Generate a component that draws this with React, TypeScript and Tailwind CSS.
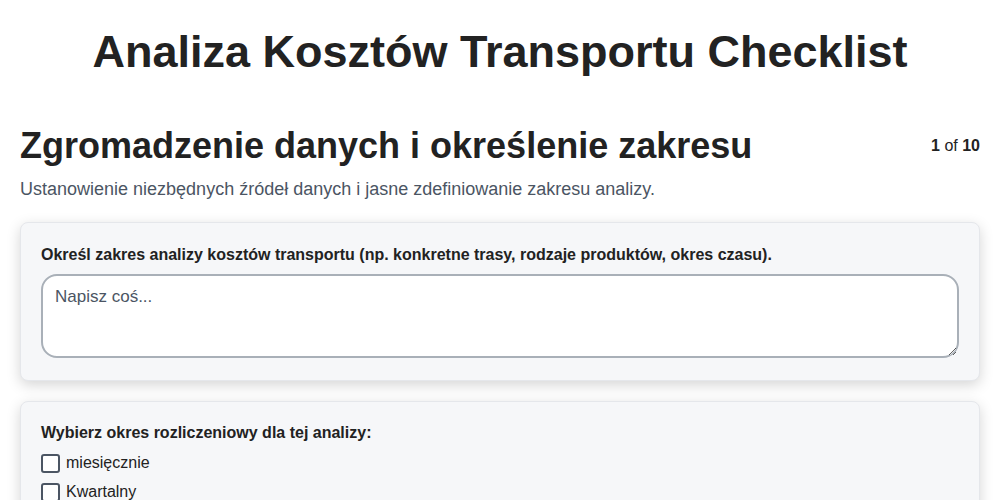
import { useState } from "react";

const periods = ["miesięcznie", "Kwartalny", "Rocznie"];

function Card({ children }: { children: React.ReactNode }) {
  return (
    <div className="rounded-lg border border-gray-200 bg-[#f6f7f9] px-5 pt-5 pb-[22px] shadow-[0_4px_14px_rgba(0,0,0,0.17)]">
      {children}
    </div>
  );
}

export default function App() {
  const [scope, setScope] = useState("");
  const [checked, setChecked] = useState<string[]>([]);

  const toggle = (p: string) =>
    setChecked((c) => (c.includes(p) ? c.filter((x) => x !== p) : [...c, p]));

  return (
    <div className="min-h-screen bg-white font-['Liberation_Sans',Arial,sans-serif] text-[#222]">
      <h1 className="pt-[27px] text-center text-[45px] font-bold leading-[50px]">
        Analiza Kosztów Transportu Checklist
      </h1>

      <div className="px-5 pt-[49px]">
        <div className="flex items-start justify-between">
          <h2 className="text-[36px] font-bold leading-[40px]">
            Zgromadzenie danych i określenie zakresu
          </h2>
          <span className="pt-[8px] text-base">
            <b>1</b> of <b>10</b>
          </span>
        </div>
        <p className="mt-[10px] text-[18px] leading-[26px] text-[#4b5563]">
          Ustanowienie niezbędnych źródeł danych i jasne zdefiniowanie zakresu analizy.
        </p>

        <div className="mt-[20px] flex flex-col gap-[20px]">
          <Card>
            <label className="block text-base font-bold">
              Określ zakres analizy kosztów transportu (np. konkretne trasy, rodzaje produktów, okres czasu).
            </label>
            <textarea
              value={scope}
              onChange={(e) => setScope(e.target.value)}
              placeholder="Napisz coś..."
              className="mt-[7px] block h-[84px] w-full rounded-2xl border-2 border-[#a9b0b8] bg-white px-3 py-2 text-[17px] placeholder:text-[#4b5563]"
            />
          </Card>

          <div className="rounded-lg border border-gray-200 bg-[#f6f7f9] px-5 pt-[19px] pb-[22px] shadow-[0_4px_14px_rgba(0,0,0,0.17)]">
            <p className="text-base font-bold">Wybierz okres rozliczeniowy dla tej analizy:</p>
            <div className="mt-[6px] flex flex-col gap-[5px]">
              {periods.map((p) => (
                <label key={p} className="flex items-center gap-[6px] text-base">
                  <input
                    type="checkbox"
                    checked={checked.includes(p)}
                    onChange={() => toggle(p)}
                    className="h-[19px] w-[19px] appearance-none rounded-[3px] border-2 border-[#4b5563] bg-white"
                  />
                  {p}
                </label>
              ))}
            </div>
          </div>
        </div>
      </div>
    </div>
  );
}
